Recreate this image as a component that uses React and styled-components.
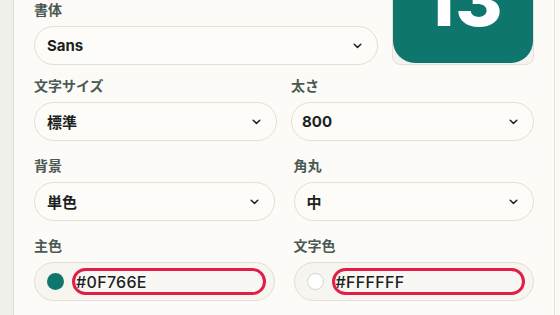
import React from 'react';
import styled, { createGlobalStyle } from 'styled-components';

const GlobalStyle = createGlobalStyle`
    body {
        margin: 0;
        background: #fbfaf6;
        overflow: hidden;
        font-family: Inter, "Noto Sans CJK JP", sans-serif;
    }
`;

const Page = styled.div`
    display: flex;
    height: 315px;
`;

const SideStrip = styled.div`
    width: 13px;
    flex-shrink: 0;
    background: #eef0ec;
`;

const Panel = styled.div`
    box-sizing: border-box;
    width: 542px;
    flex-shrink: 0;
    padding: 0 20px;
    background: #fcfbf7;
    border-left: 1px solid #dfddd4;
    border-right: 1px solid #e4e1d8;
    overflow: hidden;
`;

const Content = styled.div`
    margin-top: -78px;
`;

const TopRow = styled.div`
    display: flex;
    align-items: flex-end;
    gap: 14px;
    margin-bottom: 13px;
`;

const Row = styled.div`
    display: grid;
    grid-template-columns: 1fr 1fr;
    column-gap: ${(p) => p.$gap}px;
    margin-bottom: 17px;
`;

const Field = styled.div`
    flex: 1;
    min-width: 0;
`;

const Label = styled.div`
    font-size: 14px;
    line-height: 16px;
    font-weight: 700;
    color: #4a5952;
    margin-bottom: 8px;
`;

const Select = styled.div`
    box-sizing: border-box;
    height: 39px;
    display: flex;
    align-items: center;
    justify-content: space-between;
    padding: 0 15px 0 ${(p) => p.$pad || 12}px;
    border: 1px solid #e2dfd4;
    border-radius: 20px;
    background: #fdfcf9;
    font-size: 15px;
    font-weight: 700;
    color: #1c1f1e;
`;

const Chevron = () => (
    <svg width="9" height="6" viewBox="0 0 9 6">
        <path d="M1.2 1.2 4.5 4.4 7.8 1.2" fill="none" stroke="#222" strokeWidth="1.5" strokeLinecap="round" strokeLinejoin="round" />
    </svg>
);

const PreviewFrame = styled.div`
    box-sizing: border-box;
    width: 142px;
    height: 143px;
    flex-shrink: 0;
    padding: 0 0 1px;
    border: 1px solid #e4e1d8;
    border-radius: 8px;
    background: #f4f3ee;
`;

const Tile = styled.div`
    height: 100%;
    display: flex;
    align-items: center;
    justify-content: center;
    padding-top: 14px;
    box-sizing: border-box;
    border-radius: 22px;
    background: #0f766e;
    color: #fff;
    font-size: 72px;
    line-height: 1;
    font-weight: 800;
    letter-spacing: 1px;
`;

const ColorBox = styled.div`
    box-sizing: border-box;
    height: 39px;
    display: flex;
    align-items: center;
    gap: 8px;
    padding: 0 8px 0 12px;
    border: 1px solid #e2dfd4;
    border-radius: 20px;
    background: #f6f5f0;
`;

const Swatch = styled.span`
    width: 17px;
    height: 17px;
    flex-shrink: 0;
    border-radius: 50%;
    background: ${(p) => p.$color};
    box-sizing: border-box;
    border: ${(p) => (p.$light ? '1px solid #d6d4cc' : 'none')};
`;

const HexInput = styled.input`
    box-sizing: border-box;
    flex: 1;
    min-width: 0;
    height: 27px;
    padding: 0 0 0 1px;
    border: 3px solid #e11d48;
    border-radius: 14px;
    background: #f8f7f3;
    font-family: inherit;
    font-size: 16px;
    font-weight: 500;
    letter-spacing: 0.3px;
    color: #1c1f1e;
    outline: none;
`;

const SelectField = ({ label, value, pad }) => (
    <Field>
        <Label>{label}</Label>
        <Select $pad={pad}>
            <span>{value}</span>
            <Chevron />
        </Select>
    </Field>
);

const ColorField = ({ label, value, light }) => (
    <Field>
        <Label>{label}</Label>
        <ColorBox>
            <Swatch $color={value} $light={light} />
            <HexInput defaultValue={value} />
        </ColorBox>
    </Field>
);

const App = () => {
    return (
        <Page>
            <GlobalStyle />
            <SideStrip />
            <Panel>
                <Content>
                    <TopRow>
                        <SelectField label="書体" value="Sans" />
                        <PreviewFrame>
                            <Tile>13</Tile>
                        </PreviewFrame>
                    </TopRow>

                    <Row $gap={14}>
                        <SelectField label="文字サイズ" value="標準" />
                        <SelectField label="太さ" value="800" pad={10} />
                    </Row>

                    <Row $gap={19}>
                        <SelectField label="背景" value="単色" />
                        <SelectField label="角丸" value="中" />
                    </Row>

                    <Row $gap={19}>
                        <ColorField label="主色" value="#0F766E" />
                        <ColorField label="文字色" value="#FFFFFF" light />
                    </Row>
                </Content>
            </Panel>
        </Page>
    );
};

export default App;
